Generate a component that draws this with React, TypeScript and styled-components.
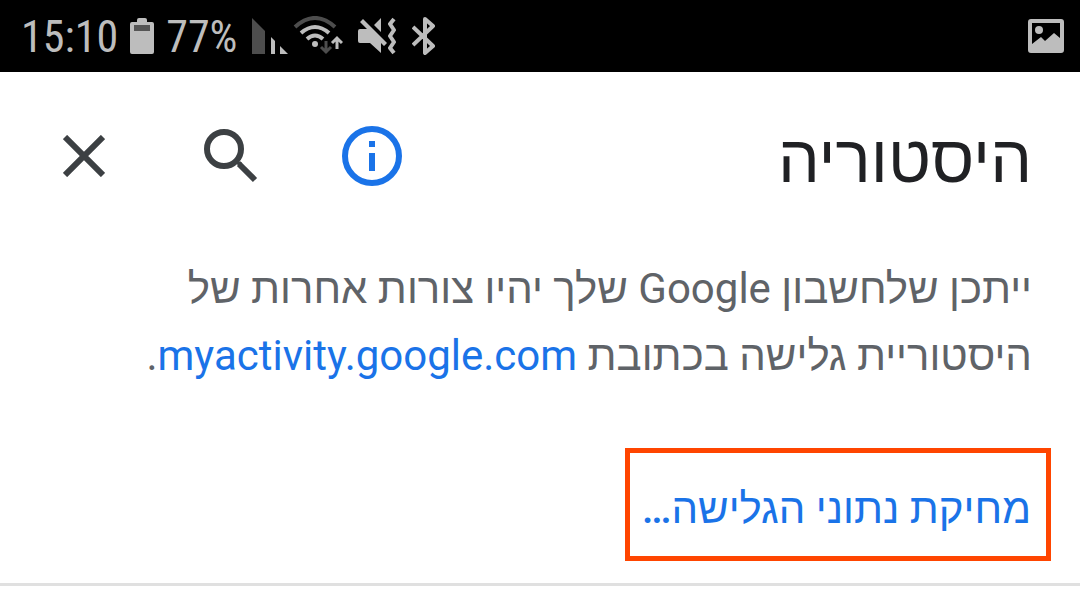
import React from 'react';
import styled, { createGlobalStyle } from 'styled-components';

const GlobalStyle = createGlobalStyle`
  * { box-sizing: border-box; }
  body {
    margin: 0;
    background: #fff;
    font-family: Roboto, "Liberation Sans", sans-serif;
  }
`;

const StatusBar = styled.div`
  display: flex;
  align-items: center;
  justify-content: space-between;
  height: 72px;
  padding: 0 16px 0 21px;
  background: #000;
  color: #bdbdbd;
`;

const StatusGroup = styled.div`
  display: flex;
  align-items: center;
`;

const StatusText = styled.span<{ $gap?: number }>`
  margin-left: ${({ $gap = 0 }) => $gap}px;
  padding-top: 2px;
  font-family: "Roboto Condensed", "Liberation Sans Narrow", Roboto, sans-serif;
  font-size: 44px;
  font-weight: 400;
  line-height: 70px;
  white-space: nowrap;
`;

const Icon = styled.svg<{ $gap?: number }>`
  display: block;
  flex: none;
  margin-left: ${({ $gap = 0 }) => $gap}px;
`;

const Header = styled.header`
  display: flex;
  align-items: center;
  justify-content: space-between;
  height: 168px;
  padding: 0 48px 0 12px;
`;

const Title = styled.h1`
  margin: 0;
  padding-top: 8px;
  color: #202124;
  font-size: 66px;
  font-weight: 400;
  line-height: 84px;
`;

const Toolbar = styled.div`
  display: flex;
  direction: ltr;
`;

const IconButton = styled.button<{ $active?: boolean }>`
  display: flex;
  align-items: center;
  justify-content: center;
  width: 144px;
  height: 144px;
  padding: 0;
  border: 0;
  background: none;
  color: ${({ $active }) => ($active ? '#1a73e8' : '#3c4043')};
  cursor: pointer;
`;

const Notice = styled.p`
  max-width: 932px;
  margin: 15px 48px 0;
  color: #5f6368;
  font-size: 42px;
  line-height: 67px;
`;

const Link = styled.a`
  color: #1a73e8;
  text-decoration: none;
`;

const Actions = styled.div`
  display: flex;
  margin-top: 59px;
  padding: 0 29px 22px;
  border-bottom: 3px solid #e0e0e0;
`;

const ClearButton = styled.button`
  padding: 25px 15px 17px 12px;
  border: 5px solid #ff4500;
  background: #fff;
  color: #1a73e8;
  font-family: inherit;
  font-size: 42px;
  font-weight: 500;
  line-height: 61px;
  white-space: nowrap;
  cursor: pointer;
`;

export default function App() {
  return (
    <>
      <GlobalStyle />
      <StatusBar>
        <StatusGroup>
          <StatusText>15:10</StatusText>
          <Icon $gap={12} width="24" height="36" viewBox="0 0 24 36" fill="#bdbdbd">
            <path d="M7 4V2q0-2 2-2h6q2 0 2 2v2h5q2 0 2 2v28q0 2-2 2H2q-2 0-2-2V6q0-2 2-2z" />
            <path d="M4 7h16v6H4z" fill="#555" />
          </Icon>
          <StatusText $gap={12}>77%</StatusText>
          <Icon $gap={15} width="36" height="36" viewBox="0 0 36 36" fill="#bdbdbd">
            <path d="M0 0l13 13v23H0z" fill="#4d4d4d" />
            <path d="M19 19l4 4v13h-4zM28 28l8 8h-8z" />
          </Icon>
          <Icon $gap={5} width="50" height="40" viewBox="0 0 50 40" fill="none" stroke="#bdbdbd">
            <path d="M2 11Q22-7 42 11" stroke="#4d4d4d" strokeWidth="4" />
            <path d="M8 17Q22 5 36 17M14 23Q22 16 30 23" strokeWidth="4" />
            <circle cx="22" cy="28" r="3" fill="#bdbdbd" stroke="none" />
            <path d="M33 25v11M28 31l5 5 5-5" stroke="#4d4d4d" strokeWidth="3" />
            <path d="M44 33V22M39 27l5-5 5 5" strokeWidth="3" />
          </Icon>
          <Icon $gap={15} width="38" height="38" viewBox="0 0 38 38" fill="#bdbdbd">
            <path d="M0 14q0-2 2-2h7L2 5l3-3 24 24-3 3-3-3v10L12 26H2q-2 0-2-2zM23 1v14l-7-7z" />
            <path d="M36 2l-4 5 4 6-4 6 4 6-4 6 4 5" fill="none" stroke="#bdbdbd" strokeWidth="4" strokeLinejoin="round" />
          </Icon>
          <Icon $gap={16} width="24" height="38" viewBox="0 0 24 38" fill="none" stroke="#bdbdbd" strokeWidth="4" strokeLinejoin="round">
            <path d="M1 10l20 19-8 7V2l8 7L1 28" />
          </Icon>
        </StatusGroup>
        <Icon width="36" height="34" viewBox="0 0 36 34" fill="#bdbdbd">
          <path fillRule="evenodd" d="M3 0h30q3 0 3 3v28q0 3-3 3H3q-3 0-3-3V3q0-3 3-3zM4 4v21l9-7 4 4 9-8 6 5V4z" />
          <circle cx="11" cy="11" r="4" />
        </Icon>
      </StatusBar>

      <main dir="rtl" lang="he">
        <Header>
          <Title>היסטוריה</Title>
          <Toolbar>
            <IconButton type="button" aria-label="סגירה">
              <Icon width="42" height="42" viewBox="0 0 42 42" stroke="#3c4043" strokeWidth="6">
                <path d="M2 2l38 38M40 2L2 40" />
              </Icon>
            </IconButton>
            <IconButton type="button" aria-label="חיפוש">
              <Icon $gap={5} width="54" height="54" viewBox="0 0 54 54" fill="none" stroke="#3c4043" strokeWidth="6">
                <circle cx="20" cy="20" r="17" />
                <path d="M35 35l16 16" />
                <path d="M33 33h4v4l-3-1z" fill="#3c4043" strokeWidth="1" />
              </Icon>
            </IconButton>
            <IconButton type="button" $active aria-label="מידע">
              <Icon width="60" height="60" viewBox="0 0 60 60" fill="currentColor">
                <circle cx="30" cy="30" r="27" fill="none" stroke="currentColor" strokeWidth="6" />
                <path d="M27 15h6v6h-6zM27 27h6v18h-6z" />
              </Icon>
            </IconButton>
          </Toolbar>
        </Header>
        <Notice>
          ייתכן שלחשבון Google שלך יהיו צורות אחרות של היסטוריית גלישה בכתובת{' '}
          <Link href="https://myactivity.google.com">myactivity.google.com</Link>.
        </Notice>
        <Actions>
          <ClearButton type="button">מחיקת נתוני הגלישה…</ClearButton>
        </Actions>
      </main>
    </>
  );
}
